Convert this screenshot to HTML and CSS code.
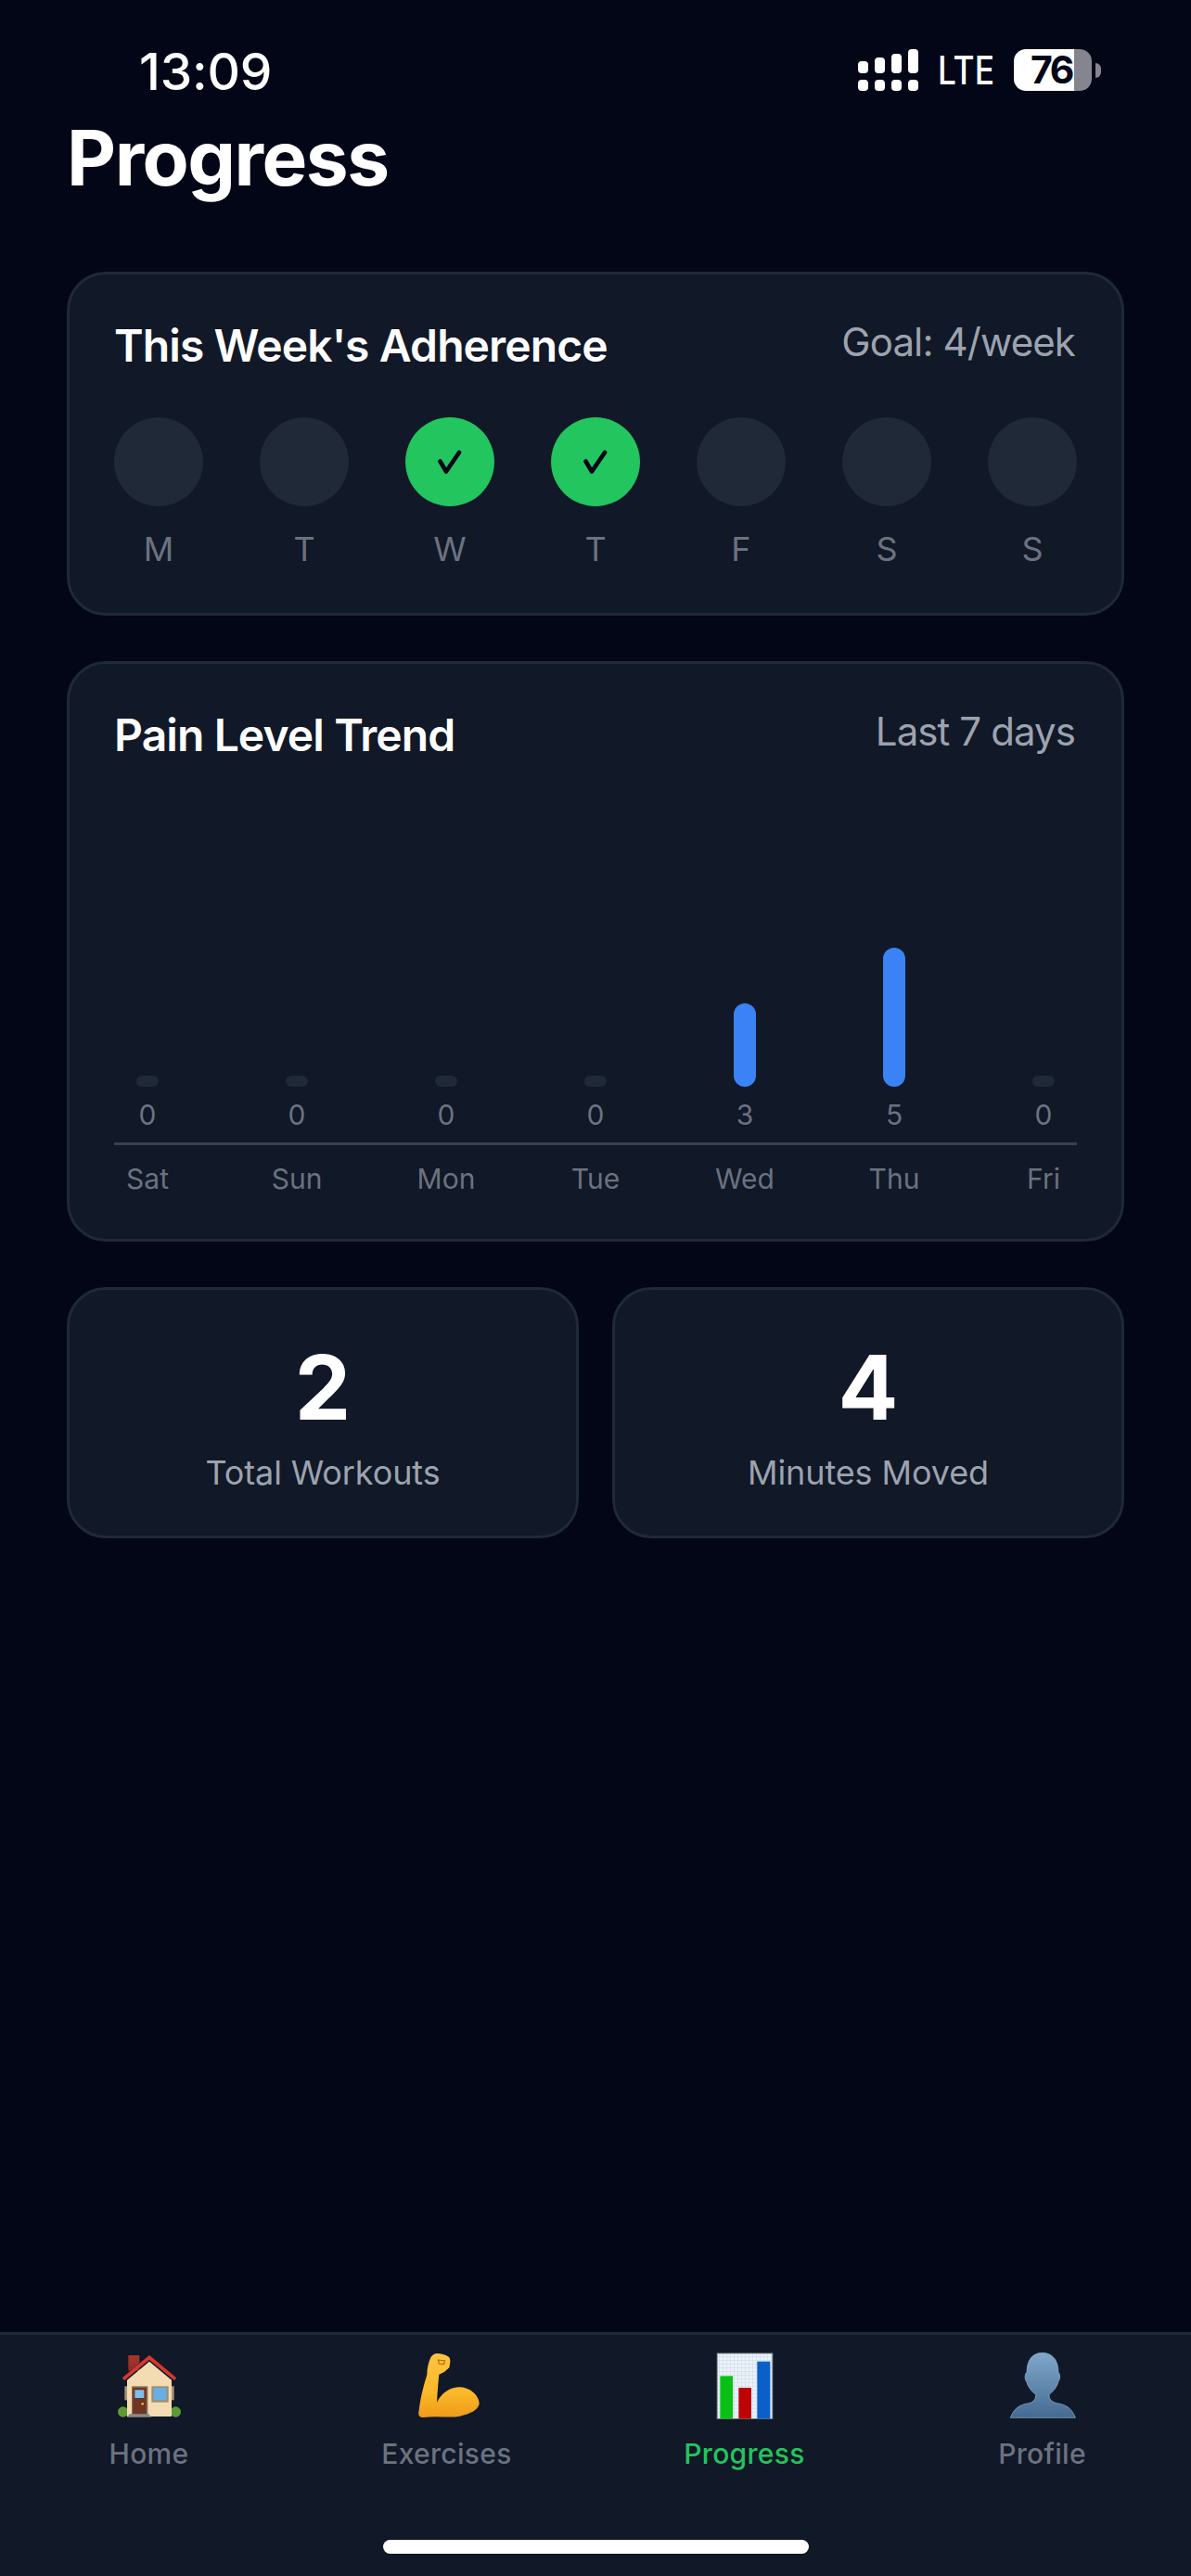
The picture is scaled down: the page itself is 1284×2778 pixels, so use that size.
FILE: index.html
```html
<!DOCTYPE html>
<html lang="en">
<head>
<meta charset="utf-8">
<title>Progress</title>
<link rel="stylesheet" href="styles.css">
</head>
<body>
<div class="app">
  <header class="status">
    <span class="time">13:09</span>
    <div class="status-right">
      <svg class="signal" width="66" height="45" viewBox="0 0 66 45" fill="#fff">
        <rect x="0" y="13" width="11" height="13" rx="4"/><rect x="18" y="9" width="11" height="17" rx="4"/><rect x="36" y="5" width="11" height="21" rx="4"/><rect x="54" y="0" width="11" height="26" rx="4"/>
        <rect x="0" y="33" width="11" height="12" rx="4"/><rect x="18" y="33" width="11" height="12" rx="4"/><rect x="36" y="33" width="11" height="12" rx="4"/><rect x="54" y="33" width="11" height="12" rx="4"/>
      </svg>
      <span class="lte">LTE</span>
      <div class="battery"><span class="batt-num">76</span></div>
      <span class="batt-cap"></span>
    </div>
  </header>
  <main class="content">
    <h1 class="page-title">Progress</h1>
    <section class="card adherence">
      <div class="card-head"><h2>This Week's Adherence</h2><span class="meta">Goal: 4/week</span></div>
      <div class="week">
        <div class="day"><span class="dot"></span><span class="day-l">M</span></div>
        <div class="day"><span class="dot"></span><span class="day-l">T</span></div>
        <div class="day"><span class="dot on"><svg width="30" height="30" viewBox="0 0 30 30" fill="none" stroke="#020617" stroke-width="4.600" stroke-linecap="round" stroke-linejoin="round"><path d="M4.500 14.500 11 25.500 25 5"/></svg></span><span class="day-l">W</span></div>
        <div class="day"><span class="dot on"><svg width="30" height="30" viewBox="0 0 30 30" fill="none" stroke="#020617" stroke-width="4.600" stroke-linecap="round" stroke-linejoin="round"><path d="M4.500 14.500 11 25.500 25 5"/></svg></span><span class="day-l">T</span></div>
        <div class="day"><span class="dot"></span><span class="day-l">F</span></div>
        <div class="day"><span class="dot"></span><span class="day-l">S</span></div>
        <div class="day"><span class="dot"></span><span class="day-l">S</span></div>
      </div>
    </section>
    <section class="card trend">
      <div class="card-head"><h2>Pain Level Trend</h2><span class="meta">Last 7 days</span></div>
      <div class="chart">
        <div class="col"><span class="bar zero"></span><span class="val">0</span></div>
        <div class="col"><span class="bar zero"></span><span class="val">0</span></div>
        <div class="col"><span class="bar zero"></span><span class="val">0</span></div>
        <div class="col"><span class="bar zero"></span><span class="val">0</span></div>
        <div class="col"><span class="bar b3"></span><span class="val">3</span></div>
        <div class="col"><span class="bar b5"></span><span class="val">5</span></div>
        <div class="col"><span class="bar zero"></span><span class="val">0</span></div>
      </div>
      <div class="axis">
        <span>Sat</span><span>Sun</span><span>Mon</span><span>Tue</span><span>Wed</span><span>Thu</span><span>Fri</span>
      </div>
    </section>
    <div class="stats">
      <section class="card stat"><strong>2</strong><span>Total Workouts</span></section>
      <section class="card stat"><strong>4</strong><span>Minutes Moved</span></section>
    </div>
  </main>
  <nav class="tabs">
    <div class="tab">
      <svg class="ico" width="100" height="90" viewBox="0 0 300 270">
        <defs><linearGradient id="chim" x1="0" y1="0" x2="0" y2="1"><stop offset="0" stop-color="#a8362c"/><stop offset="1" stop-color="#8c2c26"/></linearGradient></defs>
        <circle cx="65" cy="228" r="17" fill="#5c9a33"/><circle cx="235" cy="228" r="17" fill="#5c9a33"/>
        <rect x="82" y="45" width="36" height="50" fill="url(#chim)"/>
        <rect x="70" y="145" width="160" height="45" fill="#a89378"/>
        <path d="M78 125 150 65l72 60v118H78z" fill="#f3dcb2"/>
        <path d="M62 118 150 43l88 75-5 10-83-68-83 68z" fill="#22262c"/>
        <path d="M66 122 150 52l84 70" fill="none" stroke="#d8362e" stroke-width="11"/>
        <rect x="93" y="145" width="52" height="92" fill="#8a6a50"/>
        <rect x="97" y="150" width="43" height="87" fill="#6e3522"/>
        <rect x="103" y="157" width="30" height="26" fill="#7cc0ec"/>
        <circle cx="128" cy="202" r="4" fill="#f1b93a"/>
        <path d="M86 235h62l8 10H78z" fill="#8d8a84"/>
        <rect x="157" y="145" width="55" height="52" fill="#a68a6f"/>
        <rect x="163" y="150" width="43" height="40" fill="#66b0e4"/>
      </svg>
      <span>Home</span>
    </div>
    <div class="tab">
      <svg class="ico" width="100" height="90" viewBox="3 0 300 270">
        <defs><linearGradient id="arm" x1="0" y1="0" x2="0" y2="1"><stop offset="0" stop-color="#fcc440"/><stop offset=".6" stop-color="#fcb929"/><stop offset="1" stop-color="#ef9a1a"/></linearGradient></defs>
        <path d="M118 39C130 38 150 42 160 52 165 60 163 70 160 85 150 95 140 103 127 107 125 125 122 160 120 198 135 165 165 148 195 148 230 150 257 175 257 203 250 225 225 235 195 242 160 248 120 240 75 246 62 246 58 235 62 225 65 190 75 150 88 108 88 90 92 70 100 52 105 45 110 40 118 39Z" fill="url(#arm)"/>
        <path d="M124 60 146 63 142 74 127 72Z" fill="none" stroke="#b8690a" stroke-width="3.500"/>
      </svg>
      <span>Exercises</span>
    </div>
    <div class="tab">
      <svg class="ico" width="100" height="90" viewBox="6 0 300 270">
        <defs><pattern id="grid" width="12" height="12" patternUnits="userSpaceOnUse"><rect width="12" height="12" fill="#edf2f7"/><path d="M0 0h12M0 0v12" stroke="#c6d9ec" stroke-width="3"/></pattern></defs>
        <rect x="65" y="37" width="182" height="215" fill="#6c7480"/>
        <rect x="68" y="40" width="176" height="209" fill="url(#grid)"/>
        <rect x="76" y="112" width="41" height="138" fill="#0bc015"/>
        <rect x="136" y="150" width="41" height="100" fill="#bd0404"/>
        <rect x="196" y="65" width="42" height="185" fill="#0b60c8"/>
      </svg>
      <span class="active">Progress</span>
    </div>
    <div class="tab">
      <svg class="ico" width="100" height="90" viewBox="9 0 300 270">
        <defs><linearGradient id="bust" x1="0" y1="0" x2="0" y2="1"><stop offset="0" stop-color="#80a8ca"/><stop offset="1" stop-color="#456a91"/></linearGradient></defs>
        <path d="M158 37C190 37 210 60 210 100 216 105 217 122 210 130 205 150 190 165 180 172 180 185 185 195 205 200 240 205 255 220 265 247L55 247C65 220 80 205 115 200 133 195 137 185 137 172 127 165 112 150 107 130 100 122 101 105 108 100 108 60 126 37 158 37Z" fill="url(#bust)" stroke="#8fb6d8" stroke-width="2"/>
      </svg>
      <span>Profile</span>
    </div>
    <span class="home-bar"></span>
  </nav>
</div>
</body>
</html>
```
FILE: styles.css
```css
* { box-sizing: border-box; margin: 0; padding: 0; }
html, body { background: #020617; }
body { font-family: Inter, "Liberation Sans", sans-serif; color: #fff; }
.app { width: 1284px; height: 2778px; display: flex; flex-direction: column; overflow: hidden; }
.status { height: 120px; flex: none; display: flex; justify-content: space-between; align-items: flex-start; padding: 49px 97px 0 150px; }
.time { font-size: 55px; line-height: 56px; font-weight: 500; letter-spacing: -.2px; }
.status-right { display: flex; align-items: center; margin-top: 4px; height: 45px; }
.signal { display: block; }
.lte { font-size: 42px; font-weight: 500; margin-left: 20px; transform: scaleX(.84); transform-origin: left center; width: 82px; white-space: nowrap; }
.battery { width: 84px; height: 45px; background: linear-gradient(90deg, #fff 65px, #84858f 65px); border-radius: 13px; display: flex; align-items: center; }
.batt-num { color: #020617; font-size: 41px; font-weight: 700; line-height: 45px; margin-left: 18px; letter-spacing: -2.500px; }
.batt-cap { width: 6px; height: 16px; margin-left: 4px; background: #84858f; border-radius: 0 8px 8px 0; }
.content { flex: 1; padding: 0 72px; display: flex; flex-direction: column; gap: 49px; }
.page-title { font-size: 82px; line-height: 102px; font-weight: 700; margin-bottom: 22px; letter-spacing: -1.500px; }
.card { background: #111827; border: 3px solid #1f2937; border-radius: 42px; }
.adherence { height: 371px; padding: 48px; }
.trend { height: 626px; padding: 48px; }
.card-head { display: flex; justify-content: space-between; align-items: flex-start; }
.card-head h2 { font-size: 48px; line-height: 58px; font-weight: 600; letter-spacing: -.9px; }
.meta { font-size: 42px; line-height: 50px; color: #9ca3af; letter-spacing: -.9px; margin-right: 2px; }
.week { display: flex; justify-content: space-between; margin-top: 48px; }
.day { display: flex; flex-direction: column; align-items: center; gap: 24px; width: 96px; }
.dot { width: 96px; height: 96px; border-radius: 50%; background: #1f2937; display: flex; align-items: center; justify-content: center; }
.dot.on { background: #22c55e; }
.day-l { font-size: 36px; line-height: 44px; color: #6b7280; }
.chart { display: flex; justify-content: space-between; height: 413px; border-bottom: 3px solid #374151; }
.col { width: 72px; display: flex; flex-direction: column; align-items: center; justify-content: flex-end; }
.bar { width: 24px; border-radius: 12px; background: #3b82f6; }
.bar.zero { height: 12px; background: #1f2937; }
.bar.b3 { height: 90px; }
.bar.b5 { height: 150px; }
.val { font-size: 30px; line-height: 36px; color: #6b7280; margin-top: 12px; margin-bottom: 12px; }
.axis { display: flex; justify-content: space-between; margin-top: 18px; }
.axis span { width: 72px; text-align: center; font-size: 30px; line-height: 36px; color: #6b7280; }
.stats { display: flex; gap: 36px; }
.stat { flex: 1; height: 271px; display: flex; flex-direction: column; align-items: center; justify-content: center; }
.stat strong { font-size: 96px; line-height: 116px; font-weight: 700; }
.stat span { font-size: 36px; line-height: 44px; color: #9ca3af; margin-top: 12px; letter-spacing: -.1px; }
.tabs { position: relative; flex: none; height: 263px; background: #111827; border-top: 3px solid #1f2937; display: flex; align-items: flex-start; padding-top: 7px; }
.tab { flex: 1; display: flex; flex-direction: column; align-items: center; }
.ico { display: block; }
.tab span { font-size: 30px; line-height: 36px; font-weight: 500; color: #6b7280; margin-top: 13px; letter-spacing: .3px; }
.tab span.active { color: #22c55e; }
.home-bar { position: absolute; left: 413px; bottom: 24px; width: 459px; height: 15px; background: #fff; border-radius: 8px; }
```
